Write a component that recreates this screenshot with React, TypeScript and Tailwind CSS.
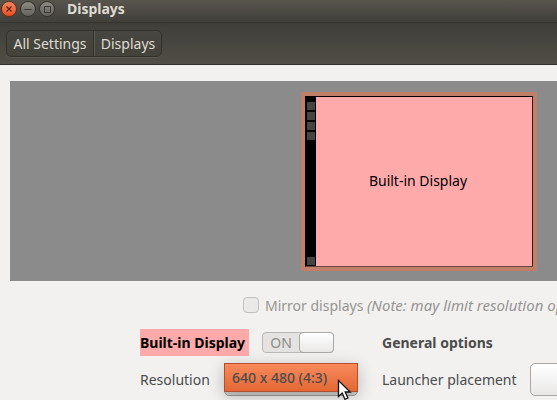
import { useState } from "react";
import type { ReactNode } from "react";

const launcherTiles = [0, 1, 2, 3];

function WindowButton({
  label,
  close = false,
  children,
}: {
  label: string;
  close?: boolean;
  children: ReactNode;
}) {
  return (
    <button
      type="button"
      aria-label={label}
      className={`flex size-4 items-center justify-center rounded-full border ${
        close
          ? "border-[#6e2f18] bg-linear-to-b from-[#f5875f] to-[#e2501f] text-[#5b2412]"
          : "border-[#33322d] bg-linear-to-b from-[#8c8a82] to-[#64635c] text-[#3a3934]"
      }`}
    >
      <svg viewBox="0 0 14 14" className="size-3.5 shrink-0" fill="none" stroke="currentColor">
        {children}
      </svg>
    </button>
  );
}

function TitleBar() {
  return (
    <header className="flex h-[23px] items-center border-b border-[#35342f] bg-linear-to-b from-[#57554c] to-[#403f3a] pb-[5px] pl-px">
      <div className="flex w-[66px] gap-[3px]">
        <WindowButton label="Close" close>
          <path d="M4.5 4.5l5 5M9.5 4.5l-5 5" strokeWidth="1.2" />
        </WindowButton>
        <WindowButton label="Minimize">
          <path d="M3.5 7.5h7" />
        </WindowButton>
        <WindowButton label="Maximize">
          <path d="M4.5 4.5h6v6h-6z" />
        </WindowButton>
      </div>
      <h1 className="text-[14px] leading-[17px] font-bold text-[#dfdbd2]">Displays</h1>
    </header>
  );
}

function Toolbar() {
  return (
    <nav className="flex h-[42px] items-center border-b border-[#32312d] bg-linear-to-b from-[#3f3e39] to-[#504e46] px-[6px] text-[14px] text-[#dfdbd2]">
      <div className="flex h-[27px] rounded-[5px] border border-[#32312c] bg-linear-to-b from-[#484640] to-[#43423b] shadow-[0_1px_0_#5b5950]">
        <button type="button" className="w-[87px] border-r border-[#32312c]">
          All Settings
        </button>
        <button type="button" className="w-[67px] border-l border-[#5b5950]">
          Displays
        </button>
      </div>
    </nav>
  );
}

function Monitor() {
  return (
    <div className="h-[179px] w-[236px] shrink-0 border-[4px] border-[#c07f69]">
      <div className="flex h-full border border-t-black border-r-[#2a1c1c] border-b-[#6b4545] border-l-black">
        <div className="flex w-[10px] flex-col gap-[2px] bg-black px-px pt-[5px]">
          {launcherTiles.map((tile) => (
            <span key={tile} className="h-2 bg-[#444444]" />
          ))}
          <span className="mt-auto mb-px h-2 bg-[#444444]" />
        </div>
        <div className="flex flex-1 items-center justify-center bg-[#ffaaaa] pr-3 pb-px text-[14px] text-black">
          Built-in Display
        </div>
      </div>
    </div>
  );
}

function Pointer() {
  return (
    <svg
      aria-hidden="true"
      viewBox="0 0 16 24"
      className="pointer-events-none absolute top-4 left-[113px] h-6 w-4"
    >
      <path
        d="M1.5 1.5v16l3.7-3.4 2.7 6.2 3-1.3-2.7-6h5z"
        fill="#fff"
        stroke="#111"
        strokeWidth="1.3"
      />
    </svg>
  );
}

function ResolutionPicker() {
  return (
    <div className="relative h-[33px] w-[134px]">
      <select
        id="resolution"
        defaultValue="640x480"
        className="h-full w-full appearance-none rounded-[5px] border border-[#a09e9b] bg-[#d2d1d0] px-2 text-transparent"
      >
        <option value="640x480">640 x 480 (4:3)</option>
      </select>
      <button
        type="button"
        className="absolute top-0 left-0 h-[29px] w-full border border-[#b44f2c] bg-linear-to-b from-[#f9895b] to-[#e36835] px-[7px] text-left text-[14px] font-medium text-[#4c4c4c] shadow-[0_4px_16px_rgba(0,0,0,0.25)]"
      >
        640 x 480 (4:3)
      </button>
      <Pointer />
    </div>
  );
}

export default function App() {
  const [mirror, setMirror] = useState(false);
  const [on, setOn] = useState(true);

  return (
    <div className="min-h-screen overflow-hidden bg-[#f2f1f0] font-['Noto_Sans','Open_Sans',sans-serif] text-[14px] whitespace-nowrap text-[#4c4c4c]">
      <TitleBar />
      <Toolbar />
      <main className="pt-4 pl-[10px]">
        <section className="flex h-[200px] items-center bg-[#8b8b8b] pl-[291px]">
          <Monitor />
        </section>

        <label className="mt-3 ml-[233px] flex h-6 items-center gap-[6px] text-[#969593]">
          <input
            type="checkbox"
            checked={mirror}
            onChange={(e) => setMirror(e.target.checked)}
            className="size-4 shrink-0 appearance-none rounded-[4px] border border-[#c3c1be] bg-[#eae9e7] checked:bg-[#aaa8a5]"
          />
          <span className="leading-5">
            Mirror displays{" "}
            <i className="text-[15px]">(Note: may limit resolution options)</i>
          </span>
        </label>

        <div className="mt-3 ml-[130px] flex items-start">
          <div className="w-[242px] shrink-0">
            <div className="flex h-[27px] items-center gap-[13px]">
              <h2 className="flex h-full w-[109px] items-center bg-[#ffaaaa] text-[14px] font-bold text-black">
                Built-in Display
              </h2>
              <button
                type="button"
                role="switch"
                aria-checked={on}
                aria-label="Built-in Display"
                onClick={() => setOn(!on)}
                className="flex h-[21px] w-[72px] rounded-[4px] border border-[#bab8b5] bg-[#e4e3e1] text-[#8c8b89]"
              >
                <span className="flex h-full flex-1 items-center justify-center text-[14px]">
                  {on ? "ON" : "OFF"}
                </span>
                <span
                  className={`-my-px -mr-px h-[21px] w-[35px] rounded-[4px] border border-[#aaa8a5] bg-linear-to-b from-white to-[#e9e8e7] ${
                    on ? "" : "order-first"
                  }`}
                />
              </button>
            </div>
            <div className="mt-[7px] flex h-[34px] items-start">
              <label htmlFor="resolution" className="w-[84px] leading-[34px]">
                Resolution
              </label>
              <ResolutionPicker />
            </div>
          </div>

          <div className="shrink-0">
            <h2 className="h-[27px] text-[14px] leading-[27px] font-bold">General options</h2>
            <div className="mt-[7px] flex h-[34px] items-start">
              <label htmlFor="launcher" className="w-[148px] leading-[34px]">
                Launcher placement
              </label>
              <select
                id="launcher"
                className="h-[33px] w-[180px] appearance-none rounded-[5px] border border-[#aaa8a5] bg-linear-to-b from-white to-[#e9e8e7] px-11"
              >
                <option>All displays</option>
              </select>
            </div>
          </div>
        </div>
      </main>
    </div>
  );
}
